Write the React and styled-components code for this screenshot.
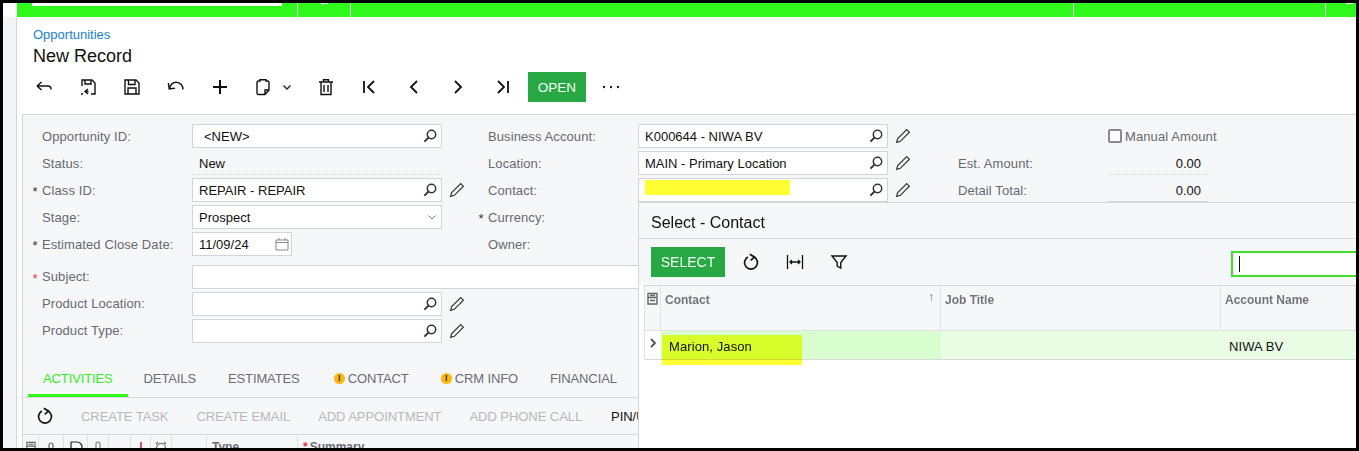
import React from 'react';
import styled, { createGlobalStyle } from 'styled-components';

const GlobalStyle = createGlobalStyle`
  html, body { margin: 0; padding: 0; background: #000; }
  body { font-family: "Liberation Sans", Arial, sans-serif; font-size: 13px; color: #111; }
`;

const Frame = styled.div`
  position: relative;
  box-sizing: border-box;
  width: 1359px;
  height: 451px;
  border: 3px solid #000;
  display: flex;
  overflow: hidden;
  background: #fff;
`;

const Rail = styled.div`
  width: 14px;
  flex: none;
  display: flex;
  flex-direction: column;
`;

const RailCap = styled.div`
  height: 14px;
  background: #fff;
`;

const RailBody = styled.div`
  flex: 1;
  background: #f3f4f6;
  border-right: 1px solid #d4d6da;
`;

const Main = styled.div`
  flex: 1;
  min-width: 0;
  display: flex;
  flex-direction: column;
`;

const TopBar = styled.div`
  height: 14px;
  flex: none;
  background: #30f71c;
  display: grid;
  grid-template-columns: 280px 53px 723px 252px 1fr;
`;

const TopCell = styled.div`
  position: relative;
  border-left: ${p => (p.$first ? 'none' : '1px solid #e6fbe2')};
`;

const TopSearch = styled.div`
  width: 250px;
  height: 3px;
  margin-left: 15px;
  background: #fff;
`;

const TopTick = styled.div`
  width: 7px;
  height: 1px;
  margin: 0 0 0 ${p => p.$left}px;
  background: #fff;
`;

const TitleBlock = styled.div`
  padding: 10px 16px 0;
`;

const Crumb = styled.div`
  font-size: 13px;
  line-height: 16px;
  color: #1a7fd0;
`;

const PageTitle = styled.div`
  margin-top: 1px;
  font-size: 18px;
  line-height: 24px;
  color: #111;
`;

const Toolbar = styled.div`
  display: flex;
  align-items: center;
  height: 30px;
  margin: 4px 0 0 5px;
`;

const ToolButton = styled.div`
  width: ${p => p.$width || 44}px;
  height: 30px;
  flex: none;
  display: flex;
  align-items: center;
  justify-content: center;
  gap: ${p => p.$gap || 0}px;
  margin-left: ${p => p.$left || 0}px;
`;

const GreenButton = styled.div`
  width: ${p => p.$width}px;
  height: 30px;
  margin-left: ${p => p.$left}px;
  flex: none;
  display: flex;
  align-items: center;
  justify-content: center;
  background: #28a745;
  color: #f2fff2;
  font-size: ${p => p.$size || 14}px;
`;

const Panel = styled.div`
  flex: 1;
  min-height: 0;
  margin: 12px 0 0 5px;
  background: #f6f7f9;
  border-top: 1px solid #d5d7db;
  border-left: 1px solid #d5d7db;
  overflow: hidden;
`;

const Form = styled.div`
  padding: 9px 0 0 5px;
`;

const Columns = styled.div`
  display: flex;
`;

const Column = styled.div`
  display: flex;
  flex-direction: column;
  gap: 3px;
  padding-left: ${p => p.$left || 0}px;
`;

const Row = styled.div`
  display: grid;
  grid-template-columns: ${p => (p.$wide ? '14px 150px 696px' : '14px 150px 250px 32px')};
  height: 24px;
  align-items: center;
`;

const SummaryRow = styled.div`
  display: grid;
  grid-template-columns: 150px 100px;
  height: 24px;
  align-items: center;
`;

const Star = styled.span`
  text-align: center;
  font-size: 13px;
  line-height: 13px;
  padding-top: 2px;
  color: ${p => (p.$red ? '#e8324a' : '#333')};
`;

const Label = styled.span`
  color: #666a70;
  font-size: 13px;
  letter-spacing: 0.1px;
  white-space: nowrap;
`;

const Input = styled.div`
  box-sizing: border-box;
  width: ${p => p.$width || '100%'};
  height: 24px;
  display: flex;
  align-items: center;
  justify-content: space-between;
  padding: 0 3px 0 6px;
  background: #fff;
  border: 1px solid #d2d4d8;
  font-size: 13px;
  color: #111;
`;

const DateInput = styled(Input)`
  width: 100px;
  padding-right: 2px;
`;

const ReadOnly = styled.div`
  box-sizing: border-box;
  height: 24px;
  padding: 1px 7px 0;
  display: flex;
  align-items: center;
  justify-content: ${p => (p.$right ? 'flex-end' : 'flex-start')};
  border-bottom: 1px ${p => p.$line || 'dotted'} #d4d6da;
`;

const Indent = styled.span`
  padding-left: 5px;
`;

const Masked = styled.span`
  width: 145px;
  height: 15px;
  margin-bottom: 5px;
  background: #ffff33;
`;

const IconCell = styled.div`
  display: flex;
  justify-content: center;
  padding-right: 2px;
`;

const CheckLine = styled.div`
  display: flex;
  align-items: center;
  gap: 3px;
`;

const CheckBox = styled.span`
  box-sizing: border-box;
  width: 14px;
  height: 14px;
  flex: none;
  border: 2px solid #8a8a96;
  border-radius: 2px;
  background: #fff;
`;

const LowerFields = styled(Column)`
  margin-top: 9px;

  ${Label} {
    padding-bottom: 2px;
  }
`;

const Tabs = styled.div`
  display: flex;
  height: 37px;
  margin-top: 17px;
  padding-left: 5px;
  border-bottom: 1px solid #d5d7db;
`;

const Tab = styled.div`
  box-sizing: border-box;
  height: 37px;
  display: flex;
  align-items: center;
  gap: 3px;
  padding: 2px ${p => (p.$active ? 15 : 16)}px 0;
  margin-left: ${p => p.$shift || 0}px;
  font-size: 13px;
  letter-spacing: -0.12px;
  color: ${p => (p.$active ? '#35ea22' : '#6a6d75')};
  border-bottom: 3px solid ${p => (p.$active ? '#30f71c' : 'transparent')};
`;

const WarnBadge = styled.span`
  width: 11px;
  height: 11px;
  border-radius: 50%;
  background: #fbb80f;
  color: #222;
  font-size: 9px;
  font-weight: 700;
  line-height: 11px;
  text-align: center;
`;

const ActionBar = styled.div`
  display: flex;
  align-items: center;
  height: 36px;
  padding-left: 12px;
  border-bottom: 1px solid #d5d7db;
`;

const Action = styled.span`
  margin-left: ${p => p.$left || 28}px;
  font-size: 13px;
  letter-spacing: -0.06px;
  white-space: nowrap;
  color: ${p => (p.$dark ? '#111' : '#b7b9bd')};
`;

const LowerGrid = styled.div`
  display: grid;
  grid-template-columns: 16px 25px 24px 21px 22px 20px 21px 35px 91px 1fr;
  height: 20px;
`;

const LowerHead = styled.div`
  box-sizing: border-box;
  display: flex;
  justify-content: ${p => (p.$text ? 'flex-start' : 'center')};
  padding: ${p => (p.$text ? '5px 0 0 5px' : '6px 0 0')};
  border-right: 1px solid #e0e2e6;
  font-size: 12px;
  font-weight: 700;
  color: #6b6e76;
`;

const RedStar = styled.span`
  color: #e8324a;
  margin-right: 2px;
`;

const Popup = styled.div`
  position: absolute;
  left: 635px;
  top: 199px;
  right: 0;
  bottom: 0;
  z-index: 5;
  background: #fff;
  border-top: 1px solid #d5d7db;
  border-left: 1px solid #d5d7db;
  overflow: hidden;
`;

const PopupTitle = styled.div`
  box-sizing: border-box;
  height: 36px;
  padding: 5px 0 0 12px;
  display: flex;
  align-items: center;
  background: #f6f7f9;
  border-bottom: 1px solid #d5d7db;
  font-size: 16px;
`;

const PopupBar = styled.div`
  box-sizing: border-box;
  height: 46px;
  display: flex;
  align-items: center;
  padding-left: 12px;
  background: #f6f7f9;
`;

const SearchField = styled.div`
  box-sizing: border-box;
  width: 135px;
  height: 26px;
  margin: 4px -10px 0 auto;
  padding-left: 6px;
  display: flex;
  align-items: center;
  background: #fff;
  border: 2px solid #3ee02c;
`;

const Caret = styled.span`
  width: 1px;
  height: 16px;
  background: #111;
`;

const Table = styled.div`
  margin-left: 5px;
  display: grid;
  grid-template-columns: 16px 280px 280px 1fr;
  grid-template-rows: 45px 29px;
  border-top: 1px solid #d5d7db;
  border-left: 1px solid #dfe1e5;
`;

const HeadCell = styled.div`
  box-sizing: border-box;
  position: relative;
  padding: 7px 0 0 4px;
  background: #f6f7f9;
  border-right: 1px solid #e0e2e6;
  border-bottom: 1px solid #e0e2e6;
  font-size: 12px;
  font-weight: 700;
  color: #72757d;
`;

const SelectorCell = styled(HeadCell)`
  padding: 6px 0 0 1px;
`;

const SortMark = styled.span`
  position: absolute;
  right: 6px;
  top: 4px;
  font-size: 12px;
  color: #72757d;
`;

const RowHandle = styled.div`
  display: flex;
  justify-content: center;
  padding-top: 6px;
  border-bottom: 1px solid #d5d7db;
`;

const BodyCell = styled.div`
  box-sizing: border-box;
  position: relative;
  display: flex;
  align-items: center;
  padding: 2px 0 0 8px;
  background: ${p => (p.$current ? '#d8fdcf' : '#e9fde5')};
  border-bottom: 1px solid #d5d7db;
  font-size: 13px;
  letter-spacing: 0.1px;
  color: #111;
`;

const Marker = styled.span`
  position: absolute;
  left: 1px;
  top: 4px;
  width: 140px;
  height: 30px;
  background: #ffff33;
  mix-blend-mode: multiply;
`;

const Svg = ({ size = 20, box = 20, sw = 1.4, color = '#111', children }) => (
  <svg width={size} height={size} viewBox={`0 0 ${box} ${box}`} fill="none" stroke={color} strokeWidth={sw}>
    {children}
  </svg>
);

const SearchIcon = () => (
  <Svg size={16} box={16} sw={1.5} color="#333">
    <circle cx="9.5" cy="6.5" r="4.2" />
    <path d="M6.4 9.6L2.4 13.6" strokeWidth="2" />
  </Svg>
);

const PencilIcon = () => (
  <Svg size={16} box={15} sw={1.1} color="#333">
    <path d="M11 1.500l2.500 2.500-8.500 8.500-3.500 1 1-3.500z" />
  </Svg>
);

const ChevronDown = ({ color = '#888', sw = 1 }) => (
  <Svg size={12} box={12} sw={sw} color={color}>
    <path d="M2.5 4.5L6 8l3.5-3.5" />
  </Svg>
);

const CalendarIcon = () => (
  <Svg size={14} box={14} sw={1} color="#888">
    <path d="M1 3h12v10H1zM1 5.500h12M4 1v2M10 1v2" />
  </Svg>
);

const BackIcon = () => (
  <Svg>
    <path d="M3 9h11c2 0 3 1 3 3.500M3 9l4.500-4M3 9l4.500 4" />
  </Svg>
);

const SaveBackIcon = () => (
  <Svg>
    <path d="M4 9V3h10l3 3v11h-4M7 3v4h6V3M10 12l-3 2.500L10 17M7 14.500h3.500M5 17H3" />
  </Svg>
);

const SaveIcon = () => (
  <Svg>
    <path d="M3 3h11l3 3v11H3zM6.500 3v4.500h6.500V3M6 17v-6h8v6" />
  </Svg>
);

const UndoIcon = () => (
  <Svg>
    <path d="M3.500 10.500a6.500 6.500 0 0 1 13 3M3 5v6h6" transform="rotate(-8 10 10)" />
  </Svg>
);

const PlusIcon = () => (
  <Svg sw={2}>
    <path d="M10 3v14M3 10h14" />
  </Svg>
);

const ClipboardIcon = () => (
  <Svg>
    <path d="M7 4V2.800h6V4h1.500A1.500 1.500 0 0 1 16 5.500V13l-4 4.500H5.500A1.500 1.500 0 0 1 4 16V5.500A1.500 1.500 0 0 1 5.500 4zM12 17.500V13h4" />
  </Svg>
);

const TrashIcon = () => (
  <Svg>
    <path d="M3 5h14M7.500 5V2.800h5V5M5 5v12.500h10V5M8 8v7M12 8v7" />
  </Svg>
);

const FirstIcon = () => (
  <Svg sw={1.8}>
    <path d="M4 4v12M14 4l-6 6 6 6" />
  </Svg>
);

const PrevIcon = () => (
  <Svg sw={1.8}>
    <path d="M13 4l-6 6 6 6" />
  </Svg>
);

const NextIcon = () => (
  <Svg sw={1.8}>
    <path d="M7 4l6 6-6 6" />
  </Svg>
);

const LastIcon = () => (
  <Svg sw={1.8}>
    <path d="M16 4v12M6 4l6 6-6 6" />
  </Svg>
);

const MoreIcon = () => (
  <svg width="20" height="20" viewBox="0 0 20 20" fill="#222">
    <circle cx="3" cy="10" r="1.200" />
    <circle cx="10" cy="10" r="1.200" />
    <circle cx="17" cy="10" r="1.200" />
  </svg>
);

const RefreshIcon = () => (
  <Svg sw={1.7}>
    <path d="M6.800 5a6.500 6.500 0 1 0 6.400 0M8.800 2.200L13.400 5l-3.600 3.400" />
  </Svg>
);

const FitIcon = () => (
  <Svg sw={1.3}>
    <path d="M2.500 3v14M17.500 3v14M5 10h10M7 8l-2 2 2 2M13 8l2 2-2 2" />
  </Svg>
);

const FilterIcon = () => (
  <Svg sw={1.4}>
    <path d="M3 4h14l-5.200 6.500V16l-3.600-2v-3.500z" />
  </Svg>
);

const FormIcon = ({ size = 13, sw = 1.4 }) => (
  <Svg size={size} box={13} sw={sw} color="#666">
    <path d="M2 1.500h9v4H2zM2 5.500h9v6.500H2zM4 3.500h5M4 8.500h5" />
  </Svg>
);

const RowChevron = () => (
  <Svg size={12} box={12} sw={1.8} color="#555">
    <path d="M4 2l4 4-4 4" />
  </Svg>
);

const lowerIcons = [
  <FormIcon size={12} sw={1.2} />,
  <Svg size={12} box={12} sw={1.2} color="#666"><path d="M4 11V4a2 2 0 0 1 4 0v7" /></Svg>,
  <Svg size={14} box={14} sw={1.2} color="#222"><path d="M2 1h6a5 5 0 0 1 5 5v8M2 1v13" /></Svg>,
  <Svg size={12} box={12} sw={1.1} color="#777"><path d="M6 1a2 2 0 0 1 2 2v5l2 3H2l2-3V3a2 2 0 0 1 2-2z" /></Svg>,
  <Svg size={12} box={12} sw={1.1} color="#777"><path d="M3 9l2 2 4-4" /></Svg>,
  <Svg size={12} box={12} sw={1.6} color="#d2264c"><path d="M6 1v11" /></Svg>,
  <Svg size={12} box={12} sw={1.1} color="#666"><circle cx="6" cy="7" r="4.500" /><path d="M1 3l2-2M11 3L9 1" /></Svg>,
];

const Field = ({ star, redStar, label, children, tool }) => (
  <Row>
    <Star $red={redStar}>{star ? '*' : ''}</Star>
    <Label>{label}</Label>
    {children}
    <IconCell>{tool && <PencilIcon />}</IconCell>
  </Row>
);

const LookupInput = ({ children }) => (
  <Input>
    {children || <span />}
    <SearchIcon />
  </Input>
);

export default function App() {
  return (
    <Frame>
      <GlobalStyle />
      <Rail>
        <RailCap />
        <RailBody />
      </Rail>
      <Main>
        <TopBar>
          <TopCell $first><TopSearch /></TopCell>
          <TopCell><TopTick $left={23} /></TopCell>
          <TopCell />
          <TopCell />
          <TopCell><TopTick $left={20} /></TopCell>
        </TopBar>

        <TitleBlock>
          <Crumb>Opportunities</Crumb>
          <PageTitle>New Record</PageTitle>
        </TitleBlock>

        <Toolbar>
          <ToolButton><BackIcon /></ToolButton>
          <ToolButton><SaveBackIcon /></ToolButton>
          <ToolButton><SaveIcon /></ToolButton>
          <ToolButton><UndoIcon /></ToolButton>
          <ToolButton><PlusIcon /></ToolButton>
          <ToolButton $width={62} $gap={8}>
            <ClipboardIcon />
            <ChevronDown color="#222" sw={1.4} />
          </ToolButton>
          <ToolButton><TrashIcon /></ToolButton>
          <ToolButton><FirstIcon /></ToolButton>
          <ToolButton><PrevIcon /></ToolButton>
          <ToolButton><NextIcon /></ToolButton>
          <ToolButton><LastIcon /></ToolButton>
          <GreenButton $width={58} $left={4} $size={13.5}>OPEN</GreenButton>
          <ToolButton $width={50}><MoreIcon /></ToolButton>
        </Toolbar>

        <Panel>
          <Form>
            <Columns>
              <Column>
                <Field label="Opportunity ID:">
                  <LookupInput><Indent>&lt;NEW&gt;</Indent></LookupInput>
                </Field>
                <Field label="Status:">
                  <ReadOnly>New</ReadOnly>
                </Field>
                <Field star label="Class ID:" tool>
                  <LookupInput>REPAIR - REPAIR</LookupInput>
                </Field>
                <Field label="Stage:">
                  <Input>Prospect<ChevronDown /></Input>
                </Field>
                <Field star label="Estimated Close Date:">
                  <DateInput>11/09/24<CalendarIcon /></DateInput>
                </Field>
              </Column>
              <Column>
                <Field label="Business Account:" tool>
                  <LookupInput>K000644 - NIWA BV</LookupInput>
                </Field>
                <Field label="Location:" tool>
                  <LookupInput>MAIN - Primary Location</LookupInput>
                </Field>
                <Field label="Contact:" tool>
                  <LookupInput><Masked /></LookupInput>
                </Field>
                <Field star label="Currency:" />
                <Field label="Owner:" />
              </Column>
              <Column $left={38}>
                <SummaryRow>
                  <span />
                  <CheckLine><CheckBox /><Label>Manual Amount</Label></CheckLine>
                </SummaryRow>
                <SummaryRow>
                  <Label>Est. Amount:</Label>
                  <ReadOnly $right>0.00</ReadOnly>
                </SummaryRow>
                <SummaryRow>
                  <Label>Detail Total:</Label>
                  <ReadOnly $right $line="solid">0.00</ReadOnly>
                </SummaryRow>
              </Column>
            </Columns>

            <LowerFields>
              <Row $wide>
                <Star $red>*</Star>
                <Label>Subject:</Label>
                <Input />
              </Row>
              <Field label="Product Location:" tool><LookupInput /></Field>
              <Field label="Product Type:" tool><LookupInput /></Field>
            </LowerFields>
          </Form>

          <Tabs>
            <Tab $active>ACTIVITIES</Tab>
            <Tab>DETAILS</Tab>
            <Tab>ESTIMATES</Tab>
            <Tab $shift={2}><WarnBadge>!</WarnBadge>CONTACT</Tab>
            <Tab><WarnBadge>!</WarnBadge>CRM INFO</Tab>
            <Tab>FINANCIAL</Tab>
          </Tabs>

          <ActionBar>
            <RefreshIcon />
            <Action $left={26}>CREATE TASK</Action>
            <Action>CREATE EMAIL</Action>
            <Action>ADD APPOINTMENT</Action>
            <Action>ADD PHONE CALL</Action>
            <Action $dark $left={29}>PIN/UNPIN</Action>
          </ActionBar>

          <LowerGrid>
            {lowerIcons.map((icon, i) => (
              <LowerHead key={i}>{icon}</LowerHead>
            ))}
            <LowerHead />
            <LowerHead $text>Type</LowerHead>
            <LowerHead $text><RedStar>*</RedStar>Summary</LowerHead>
          </LowerGrid>
        </Panel>
      </Main>

      <Popup>
        <PopupTitle>Select - Contact</PopupTitle>
        <PopupBar>
          <GreenButton $width={74} $left={0}>SELECT</GreenButton>
          <ToolButton $left={4}><RefreshIcon /></ToolButton>
          <ToolButton><FitIcon /></ToolButton>
          <ToolButton><FilterIcon /></ToolButton>
          <SearchField><Caret /></SearchField>
        </PopupBar>
        <Table>
          <SelectorCell><FormIcon /></SelectorCell>
          <HeadCell>Contact<SortMark>↑</SortMark></HeadCell>
          <HeadCell>Job Title</HeadCell>
          <HeadCell>Account Name</HeadCell>
          <RowHandle><RowChevron /></RowHandle>
          <BodyCell $current>Marion, Jason<Marker /></BodyCell>
          <BodyCell />
          <BodyCell>NIWA BV</BodyCell>
        </Table>
      </Popup>
    </Frame>
  );
}
